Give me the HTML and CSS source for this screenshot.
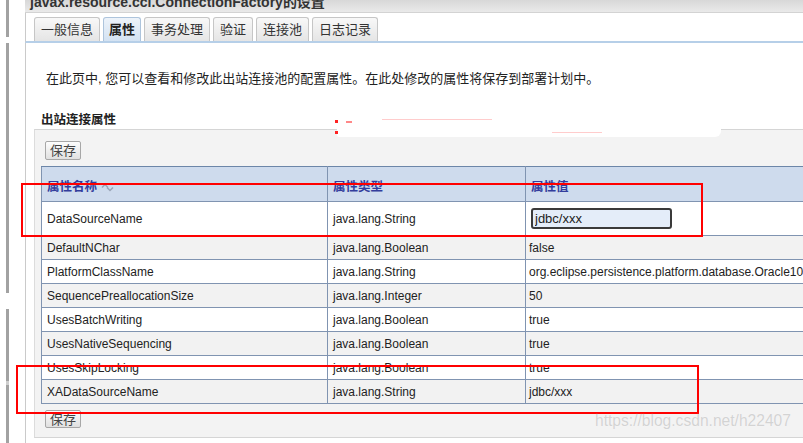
FILE: index.html
```html
<!DOCTYPE html>
<html lang="zh">
<head>
<meta charset="utf-8">
<title>ConnectionFactory 设置</title>
<link rel="stylesheet" href="styles.css">
</head>
<body>
<div class="page">
  <div class="gutter"></div>
  <div class="main">
    <div class="titlebar"><h1 class="title">javax.resource.cci.ConnectionFactory的设置</h1></div>
    <div class="tabs">
      <span class="tab">一般信息</span>
      <span class="tab active">属性</span>
      <span class="tab">事务处理</span>
      <span class="tab">验证</span>
      <span class="tab">连接池</span>
      <span class="tab">日志记录</span>
    </div>
    <div class="content">
      <p class="desc">在此页中, 您可以查看和修改此出站连接池的配置属性。在此处修改的属性将保存到部署计划中。</p>
      <h2 class="section">出站连接属性</h2>
      <div class="panel">
        <button class="btn" type="button">保存</button>
        <table class="props">
          <colgroup><col class="c1"><col class="c2"><col class="c3"></colgroup>
          <thead>
            <tr>
              <th>属性名称<svg class="sort" width="13" height="9" viewBox="0 0 13 9"><path d="M1 4.5 L4 1.5 L7 4.5 M6 4.5 L9 7.5 L12 4.5" fill="none" stroke="#9aa4b6" stroke-width="1.5"/></svg></th>
              <th>属性类型</th>
              <th class="v">属性值</th>
            </tr>
          </thead>
          <tbody>
            <tr class="tall"><td>DataSourceName</td><td>java.lang.String</td><td class="v"><input class="field" type="text" value="jdbc/xxx"></td></tr>
            <tr><td>DefaultNChar</td><td>java.lang.Boolean</td><td class="v">false</td></tr>
            <tr><td>PlatformClassName</td><td>java.lang.String</td><td class="v">org.eclipse.persistence.platform.database.Oracle10Platform</td></tr>
            <tr><td>SequencePreallocationSize</td><td>java.lang.Integer</td><td class="v">50</td></tr>
            <tr><td>UsesBatchWriting</td><td>java.lang.Boolean</td><td class="v">true</td></tr>
            <tr><td>UsesNativeSequencing</td><td>java.lang.Boolean</td><td class="v">true</td></tr>
            <tr><td>UsesSkipLocking</td><td>java.lang.Boolean</td><td class="v">true</td></tr>
            <tr><td>XADataSourceName</td><td>java.lang.String</td><td class="v">jdbc/xxx</td></tr>
          </tbody>
        </table>
        <button class="btn btn-bottom" type="button">保存</button>
      </div>
    </div>
  </div>
</div>
<div class="redact"><span class="speck s1"></span><span class="speck s2"></span><span class="speck s3"></span><span class="speck s4"></span><span class="speck s5"></span></div>
<div class="mark mark-1"></div>
<div class="mark mark-2"></div>
<div class="watermark">https://blog.csdn.net/h22407</div>
</body>
</html>
```
FILE: styles.css
```css
html, body {
  margin: 0;
  padding: 0;
}
body {
  position: relative;
  width: 803px;
  height: 443px;
  overflow: hidden;
  background: #fff;
  font-family: "Liberation Sans", "Noto Sans CJK SC", sans-serif;
  font-size: 12px;
  color: #222;
}
.page {
  display: flex;
  height: 443px;
}
.gutter {
  flex: none;
  width: 25px;
  background-image: linear-gradient(to bottom,
    #a2a2a2 0 37px, transparent 37px 43px,
    #a2a2a2 43px 293px, transparent 293px 309px,
    #a2a2a2 309px 381px, #cfcfcf 381px 385px,
    #a2a2a2 385px 443px);
  background-size: 3px 100%;
  background-position: 6px 0;
  background-repeat: no-repeat;
}
.main {
  flex: 1;
  min-width: 0;
  display: flex;
  flex-direction: column;
}
.titlebar {
  height: 12px;
  overflow: hidden;
  padding-left: 5px;
  background: linear-gradient(#d8d8d8, #eaeaea);
  border-bottom: 1px solid #d3d3d3;
}
.title {
  margin: -5px 0 0;
  font-size: 14px;
  line-height: 14px;
  font-weight: bold;
  color: #333;
  white-space: nowrap;
}
.tabs {
  display: flex;
  gap: 3px;
  padding: 4px 0 0 8px;
  border-left: 1px solid #cacaca;
  border-bottom: 2px solid #b6cfe8;
}
.tab {
  height: 24px;
  box-sizing: border-box;
  padding: 0 6px;
  border: 1px solid #c6c6c6;
  border-bottom: none;
  border-radius: 3px 3px 0 0;
  background: linear-gradient(#f8f8f8, #e5e5e5);
  font-size: 13px;
  line-height: 23px;
  color: #333;
}
.tab.active {
  padding: 0 5px;
  background: linear-gradient(#edf3fa, #d3e2f2);
  border-color: #adc4dc;
  font-weight: bold;
  color: #222;
}
.content {
  flex: 1;
  border-left: 1px solid #cacaca;
  padding-top: 28px;
}
.desc {
  margin: 0 0 0 20px;
  font-size: 13px;
  line-height: 16px;
  color: #222;
  white-space: nowrap;
}
.section {
  margin: 25px 0 0 15px;
  font-size: 12.5px;
  line-height: 16px;
  font-weight: bold;
  color: #222;
}
.panel {
  margin: 1px 0 0 8px;
  padding: 11px 0 9px 6px;
  background: #f3f3f3;
  border-top: 1px solid #d5d5d5;
  border-left: 1px solid #dcdcdc;
  border-bottom: 1px solid #d5d5d5;
}
.btn {
  display: block;
  height: 19px;
  margin-left: 4px;
  padding: 0 4px;
  border: 1px solid #a7a7a7;
  border-radius: 2px;
  background: linear-gradient(#fdfdfd, #e0e0e0);
  font-family: "Liberation Sans", "Noto Sans CJK SC", sans-serif;
  font-size: 13px;
  line-height: 17px;
  color: #444;
}
.btn-bottom {
  margin-top: 6px;
  height: 18px;
}
.props {
  margin-top: 6px;
  width: 800px;
  table-layout: fixed;
  border-collapse: collapse;
  background: #fff;
}
.c1 { width: 286px; }
.c2 { width: 198px; }
.c3 { width: 316px; }
.props th,
.props td {
  border: 1px solid #8094b1;
  padding: 0 4px 0 5px;
  text-align: left;
  white-space: nowrap;
  overflow: hidden;
  vertical-align: middle;
}
.props .v {
  padding-left: 3px;
}
.props th {
  height: 35px;
  padding-top: 3px;
  box-sizing: border-box;
  background: #cedbed;
  border-top-color: #6c86a8;
  color: #333d9c;
  font-size: 12.5px;
  font-weight: bold;
}
.props th.v {
  padding-left: 5px;
}
.props td {
  height: 23px;
  font-size: 12px;
  color: #222;
}
.props tbody tr:nth-child(even) td {
  background: #f2f2f2;
}
.props tr.tall td {
  height: 33px;
}
.sort {
  margin-left: 4px;
  vertical-align: -1px;
}
.field {
  display: block;
  width: 141px;
  height: 21px;
  box-sizing: border-box;
  margin-left: 2px;
  padding: 0 2px;
  border: 2px solid #3a3a3a;
  border-radius: 3px;
  background: #e4edf9;
  font-family: "Liberation Sans", sans-serif;
  font-size: 13px;
  color: #222;
}
.mark {
  position: absolute;
  box-sizing: border-box;
  border: 2px solid #f00;
}
.mark-1 {
  left: 21px;
  top: 183px;
  width: 682px;
  height: 54px;
}
.mark-2 {
  left: 16px;
  top: 365px;
  width: 683px;
  height: 49px;
}
.redact {
  position: absolute;
  left: 337px;
  top: 116px;
  width: 384px;
  height: 21px;
  background: #fff;
  border-radius: 3px 8px 6px 2px;
}
.speck {
  position: absolute;
  background: #f22;
}
.s1 { left: -2px; top: 4px; width: 3px; height: 3px; }
.s2 { left: -2px; top: 15px; width: 3px; height: 3px; }
.s3 { left: 9px; top: 5px; width: 6px; height: 2px; background: #f88; }
.s4 { left: 45px; top: 3px; width: 110px; height: 1px; background: #fcc; }
.s5 { left: 215px; top: 16px; width: 50px; height: 1px; background: #fcc; }
.watermark {
  position: absolute;
  left: 595px;
  top: 412px;
  font-family: "Liberation Sans", sans-serif;
  font-size: 15.6px;
  line-height: 18px;
  color: #d3d3d3;
  text-shadow: 0 0 1px #fff;
  white-space: nowrap;
}
```
